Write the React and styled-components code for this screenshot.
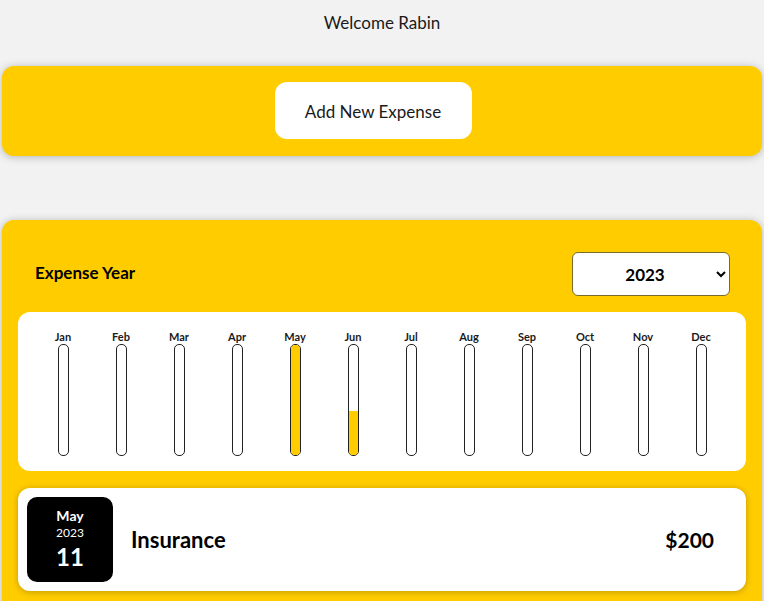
import React from "react";
import styled, { createGlobalStyle } from "styled-components";

const GlobalStyle = createGlobalStyle`
  * {
    box-sizing: border-box;
  }
  body {
    margin: 0;
    background: #f2f2f2;
    font-family: Lato, "Liberation Sans", sans-serif;
    color: #1a1a1a;
  }
`;

const Page = styled.div`
  padding: 0 2px;
`;

const Welcome = styled.p`
  margin: 0;
  padding-top: 12px;
  height: 66px;
  text-align: center;
  font-size: 17px;
`;

const Card = styled.div`
  background: #ffcc00;
  border-radius: 12px;
  box-shadow: 0 1px 8px rgba(0, 0, 0, 0.25);
`;

const NewExpense = styled(Card)`
  display: flex;
  justify-content: center;
  padding: 16px 18px 17px 0;
  margin-bottom: 64px;
`;

const AddButton = styled.button`
  width: 197px;
  height: 57px;
  padding-top: 3px;
  border: none;
  border-radius: 12px;
  background: white;
  font-family: inherit;
  font-size: 17px;
  color: #1a1a1a;
  cursor: pointer;
`;

const Expenses = styled(Card)`
  padding: 32px 16px 10px;
  min-height: 400px;
`;

const FilterRow = styled.div`
  display: flex;
  justify-content: space-between;
  align-items: center;
  padding: 0 16px 0 17px;
  margin-bottom: 16px;
`;

const FilterLabel = styled.label`
  font-weight: 700;
  font-size: 17px;
  color: #000;
  margin-top: -4px;
`;

const YearSelect = styled.select`
  width: 158px;
  height: 44px;
  border: 1px solid #7a6a30;
  border-radius: 6px;
  background: white;
  font-family: inherit;
  font-weight: 700;
  font-size: 17px;
  text-align: center;
  color: #000;
`;

const Chart = styled.div`
  display: flex;
  padding: 18px 16px 15px;
  background: white;
  border-radius: 12px;
  margin-bottom: 17px;
`;

const BarColumn = styled.div`
  flex: 1;
  display: flex;
  flex-direction: column;
  align-items: center;
`;

const BarLabel = styled.span`
  font-size: 11px;
  font-weight: 700;
  line-height: 14px;
`;

const BarTrack = styled.div`
  width: 11px;
  height: 112px;
  border: 1px solid #222;
  border-radius: 5px;
  background: white;
  display: flex;
  flex-direction: column;
  justify-content: flex-end;
  overflow: hidden;
`;

const BarFill = styled.div`
  width: 100%;
  background: #ffcc00;
`;

const ItemCard = styled.div`
  display: flex;
  align-items: center;
  gap: 18px;
  padding: 9px 32px 9px 9px;
  background: white;
  border-radius: 12px;
  box-shadow: 0 1px 6px rgba(0, 0, 0, 0.25);
`;

const DateBox = styled.div`
  width: 86px;
  height: 85px;
  border-radius: 10px;
  background: #000;
  color: white;
  display: flex;
  flex-direction: column;
  align-items: center;
  justify-content: center;
`;

const DateMonth = styled.span`
  font-size: 14px;
  font-weight: 700;
  line-height: 17px;
`;

const DateYear = styled.span`
  font-size: 12px;
  line-height: 17px;
`;

const DateDay = styled.span`
  font-size: 24px;
  font-weight: 700;
  line-height: 32px;
`;

const ItemTitle = styled.h2`
  flex: 1;
  margin: 0;
  font-size: 22px;
  font-weight: 700;
  color: #000;
`;

const ItemPrice = styled.span`
  font-size: 21px;
  font-weight: 700;
  color: #000;
`;

const months = [
  ["Jan", 0], ["Feb", 0], ["Mar", 0], ["Apr", 0], ["May", 200], ["Jun", 80],
  ["Jul", 0], ["Aug", 0], ["Sep", 0], ["Oct", 0], ["Nov", 0], ["Dec", 0],
];
const max = 200;

export default function App() {
  return (
    <>
      <GlobalStyle />
      <Page>
        <Welcome>Welcome Rabin</Welcome>
        <NewExpense>
          <AddButton>Add New Expense</AddButton>
        </NewExpense>
        <Expenses>
          <FilterRow>
            <FilterLabel>Expense Year</FilterLabel>
            <YearSelect defaultValue="2023">
              <option>2021</option>
              <option>2022</option>
              <option>2023</option>
            </YearSelect>
          </FilterRow>
          <Chart>
            {months.map(([name, value]) => (
              <BarColumn key={name}>
                <BarLabel>{name}</BarLabel>
                <BarTrack>
                  <BarFill style={{ height: `${(value / max) * 100}%` }} />
                </BarTrack>
              </BarColumn>
            ))}
          </Chart>
          <ItemCard>
            <DateBox>
              <DateMonth>May</DateMonth>
              <DateYear>2023</DateYear>
              <DateDay>11</DateDay>
            </DateBox>
            <ItemTitle>Insurance</ItemTitle>
            <ItemPrice>$200</ItemPrice>
          </ItemCard>
        </Expenses>
      </Page>
    </>
  );
}
